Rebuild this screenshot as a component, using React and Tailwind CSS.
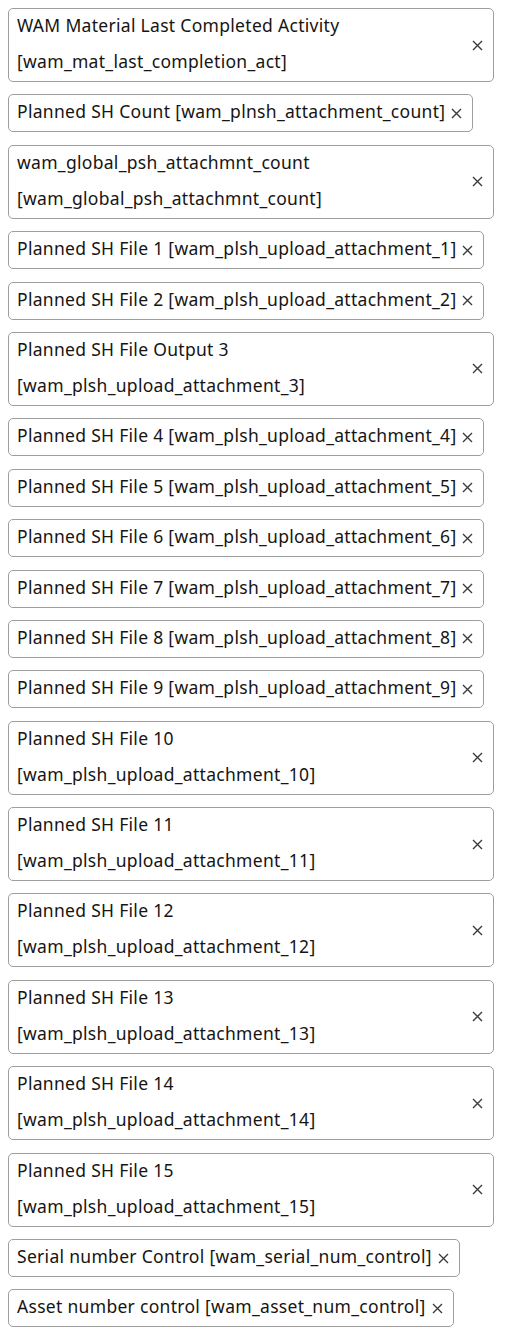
import React from 'react'

const items = [
    ["WAM Material Last Completed Activity", "[wam_mat_last_completion_act]", true],
    ["Planned SH Count", "[wam_plnsh_attachment_count]"],
    ["wam_global_psh_attachmnt_count", "[wam_global_psh_attachmnt_count]", true],
    ["Planned SH File 1", "[wam_plsh_upload_attachment_1]"],
    ["Planned SH File 2", "[wam_plsh_upload_attachment_2]"],
    ["Planned SH File Output 3", "[wam_plsh_upload_attachment_3]", true],
    ["Planned SH File 4", "[wam_plsh_upload_attachment_4]"],
    ["Planned SH File 5", "[wam_plsh_upload_attachment_5]"],
    ["Planned SH File 6", "[wam_plsh_upload_attachment_6]"],
    ["Planned SH File 7", "[wam_plsh_upload_attachment_7]"],
    ["Planned SH File 8", "[wam_plsh_upload_attachment_8]"],
    ["Planned SH File 9", "[wam_plsh_upload_attachment_9]"],
    ["Planned SH File 10", "[wam_plsh_upload_attachment_10]", true],
    ["Planned SH File 11", "[wam_plsh_upload_attachment_11]", true],
    ["Planned SH File 12", "[wam_plsh_upload_attachment_12]", true],
    ["Planned SH File 13", "[wam_plsh_upload_attachment_13]", true],
    ["Planned SH File 14", "[wam_plsh_upload_attachment_14]", true],
    ["Planned SH File 15", "[wam_plsh_upload_attachment_15]", true],
    ["Serial number Control", "[wam_serial_num_control]"],
    ["Asset number control", "[wam_asset_num_control]"],
]

const CloseIcon = () => (
    <svg width="11" height="11" viewBox="0 0 11 11" className="shrink-0">
        <path d="M1 1 L10 10 M10 1 L1 10" stroke="#3b3b3b" strokeWidth="1.4" fill="none" />
    </svg>
)

const Chip = ({ label, field, wrap }) => (
    <div className={`flex items-center border border-[#9e9e9e] rounded-[5px] bg-white pl-2 pr-[10px] ${wrap ? 'w-full' : 'w-fit'}`}>
        {wrap ? (
            <div className="flex-1 flex flex-col -translate-y-[2px]">
                <span>{label}</span>
                <span>{field}</span>
            </div>
        ) : (
            <span className="whitespace-nowrap -translate-y-[2px]">{label} {field}</span>
        )}
        <button className="ml-[6px] flex items-center justify-center">
            <CloseIcon />
        </button>
    </div>
)

const App = () => {
    return (
        <div className="w-[506px] min-h-[1330px] bg-white px-2 pt-2 font-['Noto_Sans',sans-serif] text-[17.5px] tracking-[0.3px] leading-[36px] text-[#161513]">
            <div className="w-[486px] flex flex-col gap-[12.4px]">
                {items.map(([label, field, wrap]) => (
                    <Chip key={field} label={label} field={field} wrap={wrap} />
                ))}
            </div>
        </div>
    )
}

export default App
